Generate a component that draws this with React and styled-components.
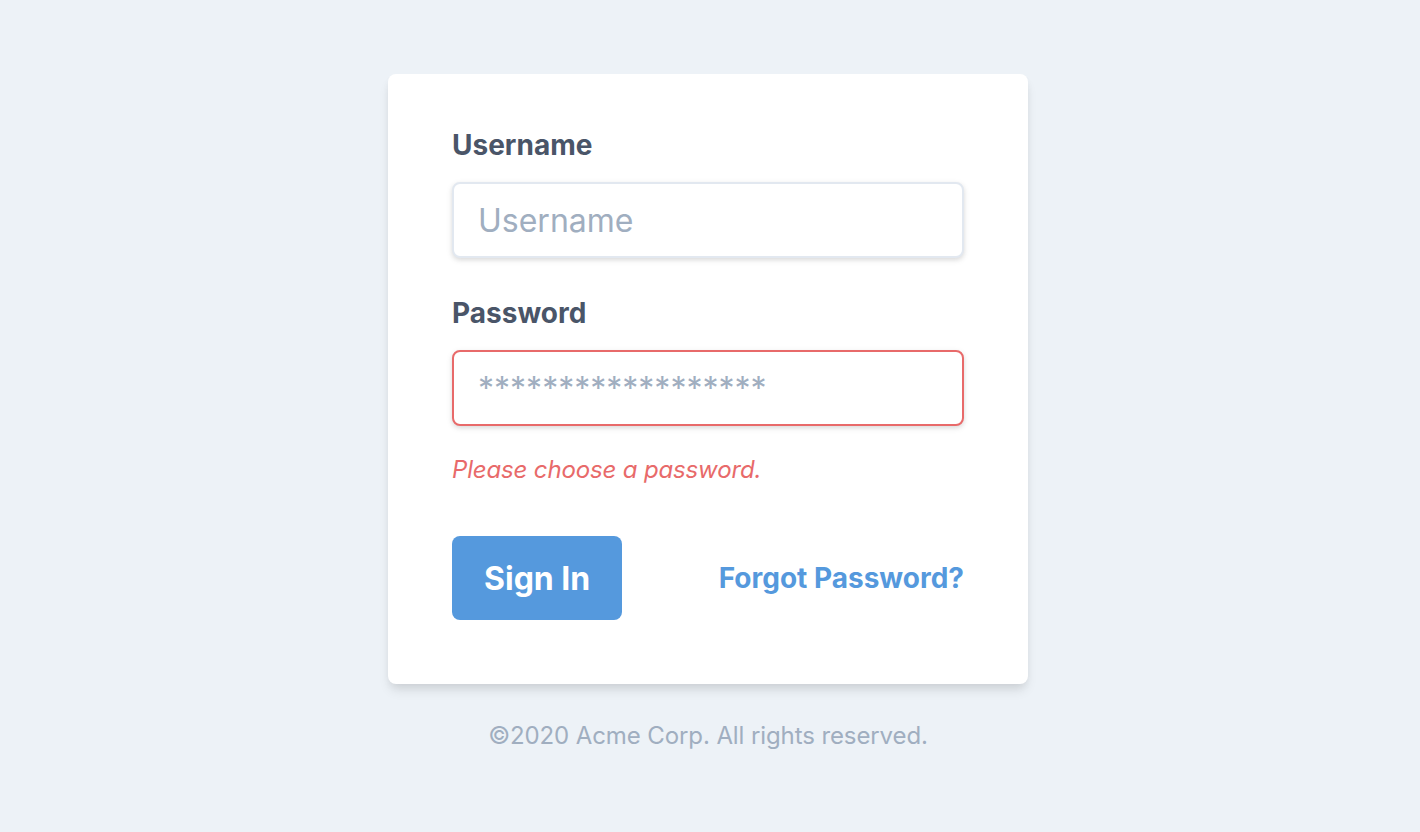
import React from "react";
import styled, { createGlobalStyle } from "styled-components";

const Global = createGlobalStyle`
  html, body { margin: 0; padding: 0; background: #edf2f7; }
  body { font-family: Inter, "Noto Sans", sans-serif; -webkit-font-smoothing: antialiased; }
  * { box-sizing: border-box; }
`;

const Page = styled.div`
  min-height: 832px;
  display: flex;
  flex-direction: column;
  align-items: center;
  padding: 74px 4px 0 0;
`;

const Card = styled.form`
  width: 640px;
  background: #fff;
  border-radius: 8px;
  box-shadow: 0 8px 12px -2px rgba(0, 0, 0, 0.1), 0 4px 8px -2px rgba(0, 0, 0, 0.06);
  padding: 48px 64px 64px;
  display: flex;
  flex-direction: column;
`;

const Field = styled.div`
  display: flex;
  flex-direction: column;
  margin-bottom: ${(p) => p.$mb || 0}px;
`;

const Label = styled.label`
  font-size: 28px;
  line-height: 46px;
  font-weight: 700;
  color: #4a5568;
  margin-bottom: 14px;
`;

const Input = styled.input`
  width: 100%;
  height: 76px;
  border: 2px solid ${(p) => (p.$error ? "#e86a6a" : "#e2e8f0")};
  border-radius: 8px;
  padding: 0 24px;
  font-family: Inter, "Noto Sans", sans-serif;
  font-size: 32px;
  color: #4a5568;
  background: #fff;
  outline: none;
  box-shadow: 0 2px 6px 0 rgba(0, 0, 0, 0.1), 0 2px 4px 0 rgba(0, 0, 0, 0.06);
  &::placeholder { color: #a0aec0; }
`;

const ErrorText = styled.p`
  margin: 26px 0 0;
  font-size: 24px;
  line-height: 36px;
  font-style: italic;
  letter-spacing: -0.15px;
  color: #e86a6a;
`;

const Actions = styled.div`
  display: flex;
  align-items: center;
  justify-content: space-between;
  margin-top: 48px;
`;

const Button = styled.button`
  height: 84px;
  padding: 0 32px;
  border: none;
  border-radius: 8px;
  background: #5599dd;
  color: #fff;
  font-family: Inter, "Noto Sans", sans-serif;
  font-size: 32px;
  font-weight: 700;
  cursor: pointer;
`;

const Link = styled.a`
  font-size: 28px;
  font-weight: 700;
  color: #5599dd;
  text-decoration: none;
  cursor: pointer;
`;

const Footer = styled.p`
  margin: 34px 0 0;
  font-size: 24px;
  line-height: 36px;
  letter-spacing: -0.1px;
  color: #a0aec0;
  text-align: center;
`;

export default function App() {
  return (
    <>
      <Global />
      <Page>
        <Card onSubmit={(e) => e.preventDefault()}>
          <Field $mb={32}>
            <Label htmlFor="username">Username</Label>
            <Input id="username" type="text" placeholder="Username" />
          </Field>
          <Field>
            <Label htmlFor="password">Password</Label>
            <Input id="password" type="password" placeholder="******************" $error />
            <ErrorText>Please choose a password.</ErrorText>
          </Field>
          <Actions>
            <Button type="button">Sign In</Button>
            <Link href="#">Forgot Password?</Link>
          </Actions>
        </Card>
        <Footer>©2020 Acme Corp. All rights reserved.</Footer>
      </Page>
    </>
  );
}
